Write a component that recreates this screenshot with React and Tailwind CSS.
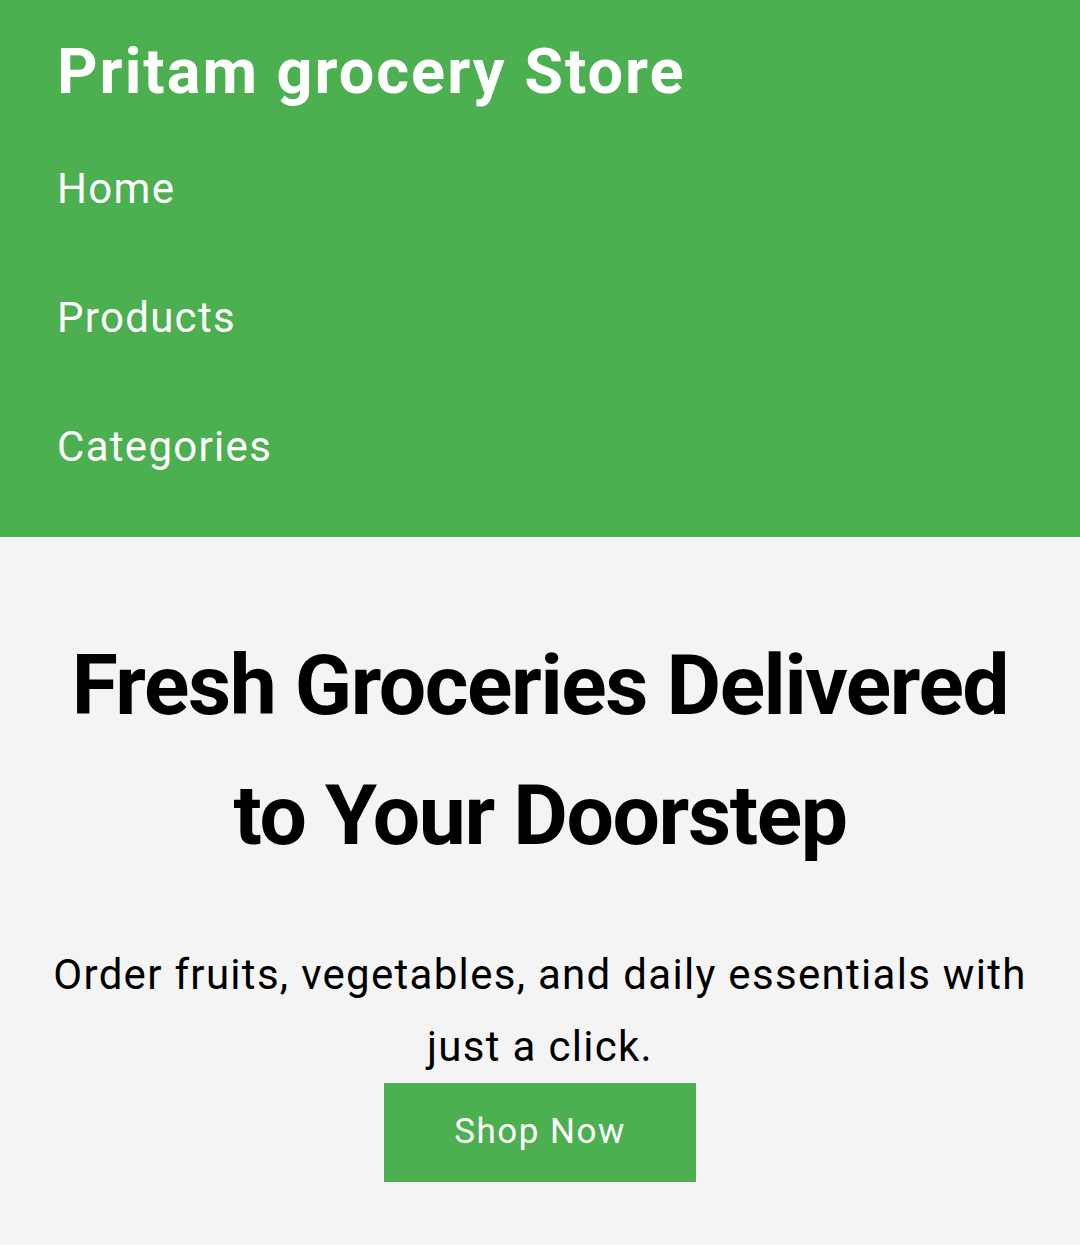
import React from 'react';

const navLinks = ['Home', 'Products', 'Categories'];

const App = () => {
  return (
    <div className="min-h-screen bg-[#f4f4f4] font-['Roboto',sans-serif]">
      {/* Header */}
      <header className="h-[537px] bg-[#4caf50] px-[57px] pt-[40px] text-white">
        <h1 className="text-[63px] font-bold leading-[63px] tracking-[2px]">Pritam grocery Store</h1>
        <nav className="mt-[65px] flex flex-col gap-[87px]">
          {navLinks.map((link) => (
            <a key={link} href="#" className="block text-[42px] leading-[42px] tracking-[1.3px] text-white">
              {link}
            </a>
          ))}
        </nav>
      </header>

      {/* Hero */}
      <section className="flex flex-col items-center px-[40px] text-center text-black">
        <h2 className="mt-[84px] text-[84px] font-bold leading-[130px] tracking-[-1.4px]">
          Fresh Groceries Delivered to Your Doorstep
        </h2>
        <p className="mt-[58px] text-[42px] leading-[72px] tracking-[1.3px]">
          Order fruits, vegetables, and daily essentials with just a click.
        </p>
        <button className="flex h-[99px] w-[312px] items-center justify-center bg-[#4caf50] text-[35px] tracking-[1.5px] text-white">
          Shop Now
        </button>
      </section>
    </div>
  );
};

export default App;
